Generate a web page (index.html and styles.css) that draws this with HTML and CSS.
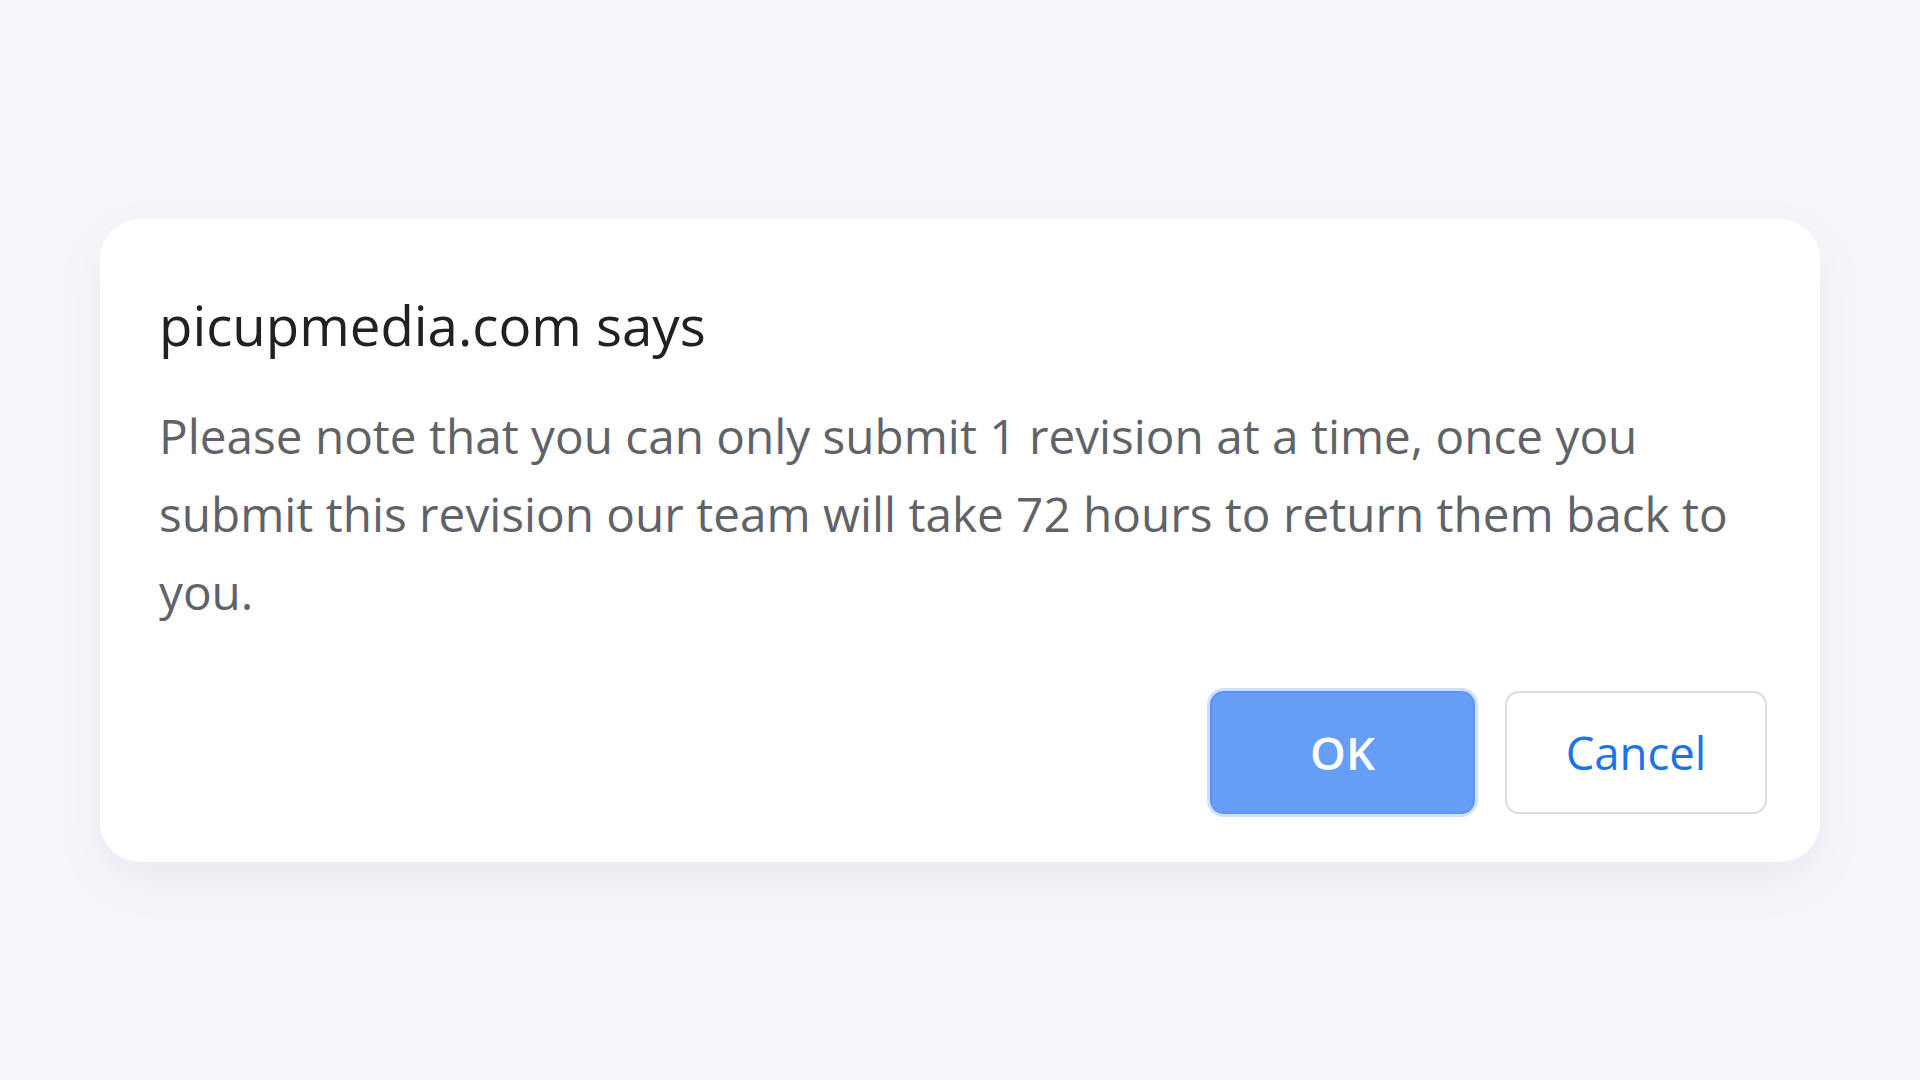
FILE: index.html
```html
<html lang="en">
<head>
  <meta charset="UTF-8">
  <meta name="viewport" content="width=device-width, initial-scale=1.0">
  <title>picupmedia.com says</title>
  <link rel="stylesheet" href="styles.css">
</head>
<body>
  <div class="dialog">
    <h1 class="dialog-title">picupmedia.com says</h1>
    <p class="dialog-message">Please note that you can only submit 1 revision at a time, once you submit this revision our team will take 72 hours to return them back to you.</p>
    <div class="dialog-buttons">
      <button class="btn btn-ok">OK</button>
      <button class="btn btn-cancel">Cancel</button>
    </div>
  </div>
</body>
</html>
```

FILE: styles.css
```css
body {
  margin: 0;
  padding: 0;
  min-height: 100vh;
  display: flex;
  align-items: center;
  justify-content: center;
  font-family: "Open Sans", "Noto Sans", sans-serif;
  background-color: #f6f6fa; /* page background */
}

.dialog {
  box-sizing: border-box;
  width: 1720px;
  height: 643px;
  padding: 66px 53px 48px 59px;
  background-color: #ffffff;
  border-radius: 40px;
  box-shadow: 0 18px 50px rgba(60, 60, 110, 0.07);
  display: flex;
  flex-direction: column;
}

.dialog-title {
  margin: 0;
  font-size: 54.6px;
  font-weight: 400;
  line-height: 80px;
  color: #202124;
}

.dialog-message {
  margin: 32px 0 0 0;
  font-size: 47.7px;
  line-height: 78px;
  color: #5f6368;
}

.dialog-buttons {
  margin-top: auto;
  display: flex;
  justify-content: flex-end;
  align-items: center;
  gap: 30px;
}

.btn {
  box-sizing: border-box;
  height: 123px;
  font-family: inherit;
  font-size: 45.5px;
  font-weight: 600;
  border-radius: 14px;
  cursor: pointer;
}

.btn-ok {
  width: 265px;
  color: #ffffff;
  background-color: #669df6;
  border: 2px solid #5a94f5;
  box-shadow: 0 0 0 3px #cfe0fc;
}

.btn-cancel {
  width: 262px;
  color: #1a73e8;
  background-color: #ffffff;
  border: 2px solid #dadce0;
  font-weight: 500;
}
```
